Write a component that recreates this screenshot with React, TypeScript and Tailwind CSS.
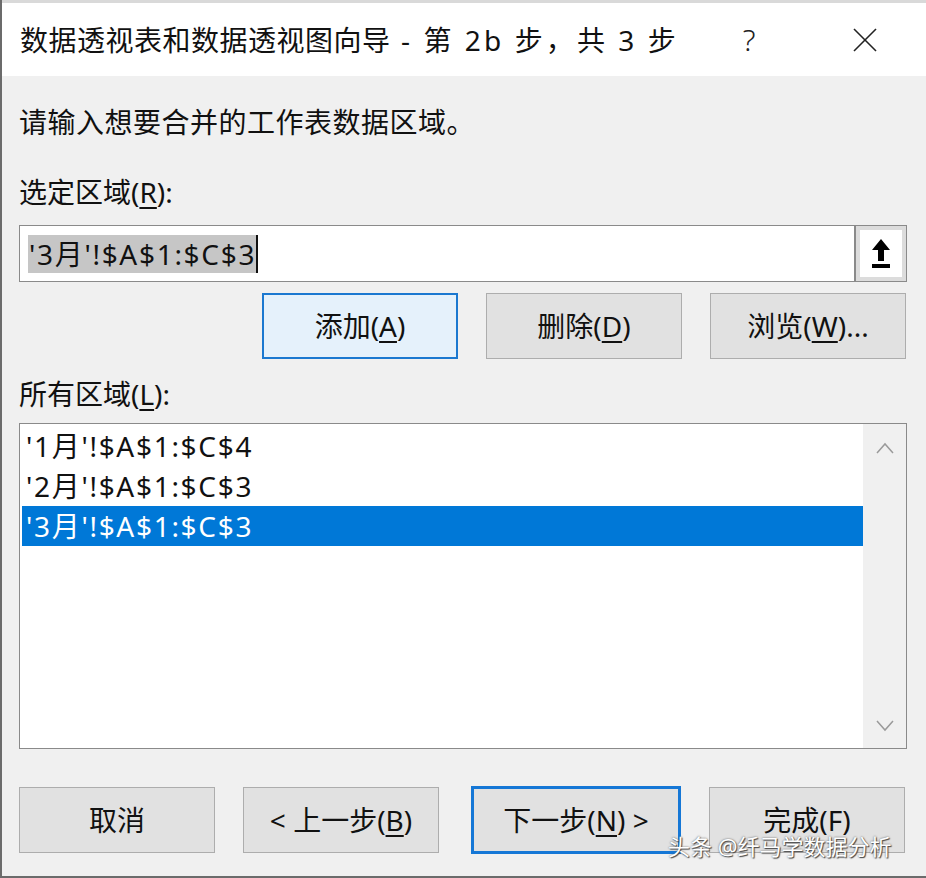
import React from "react";

const font = { fontFamily: '"Noto Sans", "Noto Sans CJK SC", sans-serif' };

function Btn({
  children,
  w = "w-[196px]",
  variant = "normal",
}: {
  children: React.ReactNode;
  w?: string;
  variant?: "normal" | "focus" | "default";
}) {
  const cls =
    variant === "focus"
      ? "border-2 border-[#1b78d0] bg-[#e5f1fb]"
      : variant === "default"
      ? "border-[3px] border-[#1577d6] bg-[#e1e1e1]"
      : "border border-[#adadad] bg-[#e1e1e1]";
  return (
    <div
      className={`${w} h-[66px] flex items-center justify-center text-[28px] text-[#111] ${cls}`}
    >
      {children}
    </div>
  );
}

function Chevron({ up }: { up?: boolean }) {
  return (
    <svg width="20" height="12" viewBox="0 0 20 12">
      <polyline
        points={up ? "2,11 10,2 18,11" : "2,1 10,10 18,1"}
        fill="none"
        stroke="#9a9a9a"
        strokeWidth="1.5"
      />
    </svg>
  );
}

export default function App() {
  return (
    <div
      className="relative w-[926px] h-[878px] bg-[#f0f0f0] border-l-2 border-b-2 border-[#6b6b6b] overflow-hidden text-[#111]"
      style={font}
    >
      <div className="h-[3px] bg-[#d9d9d9]" />
      {/* Title bar */}
      <div className="h-[73px] bg-white flex items-center">
        <div className="pl-[18px] text-[28px] leading-none tracking-[0.5px] flex-1 whitespace-nowrap">
          数据透视表和数据透视图向导
          <span className="tracking-[3.1px]"> - 第 2b 步，共 3 步</span>
        </div>
        <div className="text-[30px] font-light text-[#222] w-[40px] mr-[84px] text-center">
          ?
        </div>
        <div className="mr-[49px] flex items-center">
          <svg width="24" height="24" viewBox="0 0 24 24">
            <line x1="1" y1="1" x2="23" y2="23" stroke="#222" strokeWidth="1.6" />
            <line x1="23" y1="1" x2="1" y2="23" stroke="#222" strokeWidth="1.6" />
          </svg>
        </div>
      </div>

      <div className="pl-[17px] pr-[19px]">
        <div className="h-[40px] mt-[26px] flex items-center text-[28px] tracking-[0.5px]">
          请输入想要合并的工作表数据区域。
        </div>
        <div className="h-[40px] mt-[30px] flex items-center text-[28px]">
          选定区域(<span className="underline underline-offset-4">R</span>):
        </div>
        {/* input */}
        <div className="mt-[13px] flex h-[57px]">
          <div className="flex-1 bg-white border border-[#8a8a8a] flex items-center pl-[8px]">
            <span className="bg-[#c6c6c6] text-[28px] leading-[38px] pl-[1px] tracking-[1.7px]">
              '3月'!$A$1:$C$3
            </span>
            <span className="w-[2px] h-[38px] bg-[#111]" />
          </div>
          <div className="w-[52px] border border-[#8a8a8a] bg-[#dcdcdc] p-[4px]">
            <div className="w-full h-full bg-white flex items-center justify-center">
              <svg width="20" height="34" viewBox="0 0 20 34">
                <polygon points="10,2 19,13 13,13 13,24 7,24 7,13 1,13" fill="#000" />
                <rect x="1" y="27" width="18" height="4" fill="#000" />
              </svg>
            </div>
          </div>
        </div>
        {/* buttons row */}
        <div className="mt-[11px] flex justify-end gap-[28px] pr-[1px]">
          <Btn variant="focus">
            添加(<span className="underline underline-offset-4">A</span>)
          </Btn>
          <Btn>
            删除(<span className="underline underline-offset-4">D</span>)
          </Btn>
          <Btn>
            浏览(<span className="underline underline-offset-4">W</span>)...
          </Btn>
        </div>
        <div className="h-[40px] mt-[15px] flex items-center text-[28px]">
          所有区域(<span className="underline underline-offset-4">L</span>):
        </div>
        {/* list box */}
        <div className="mt-[9px] h-[326px] bg-white border border-[#8a8a8a] flex">
          <div className="flex-1 pt-[2px] pl-[2px]">
            <div className="h-[40px] flex items-center pl-[4px] text-[28px] tracking-[1.7px]">'1月'!$A$1:$C$4</div>
            <div className="h-[40px] flex items-center pl-[4px] text-[28px] tracking-[1.7px]">'2月'!$A$1:$C$3</div>
            <div className="h-[40px] flex items-center pl-[4px] text-[28px] tracking-[1.7px] bg-[#0078d7] text-white">
              '3月'!$A$1:$C$3
            </div>
          </div>
          <div className="w-[43px] bg-[#f0f0f0] flex flex-col items-center justify-between pt-[18px] pb-[16px]">
            <Chevron up />
            <Chevron />
          </div>
        </div>
        {/* bottom buttons */}
        <div className="mt-[37px] flex items-center">
          <Btn>取消</Btn>
          <div className="w-[28px]" />
          <Btn>
            &lt; 上一步(<span className="underline underline-offset-4">B</span>)
          </Btn>
          <div className="w-[32px]" />
          <Btn w="w-[210px] h-[68px]" variant="default">
            下一步(<span className="underline underline-offset-4">N</span>) &gt;
          </Btn>
          <div className="w-[28px]" />
          <Btn>完成(F)</Btn>
        </div>
      </div>

      {/* watermark overlay */}
      <div
        className="absolute left-[666px] top-[830px] text-[22px] text-white"
        style={{ textShadow: "0 0 2px #555, 1px 1px 1px #444" }}
      >
        头条 @纤马学数据分析
      </div>
    </div>
  );
}
